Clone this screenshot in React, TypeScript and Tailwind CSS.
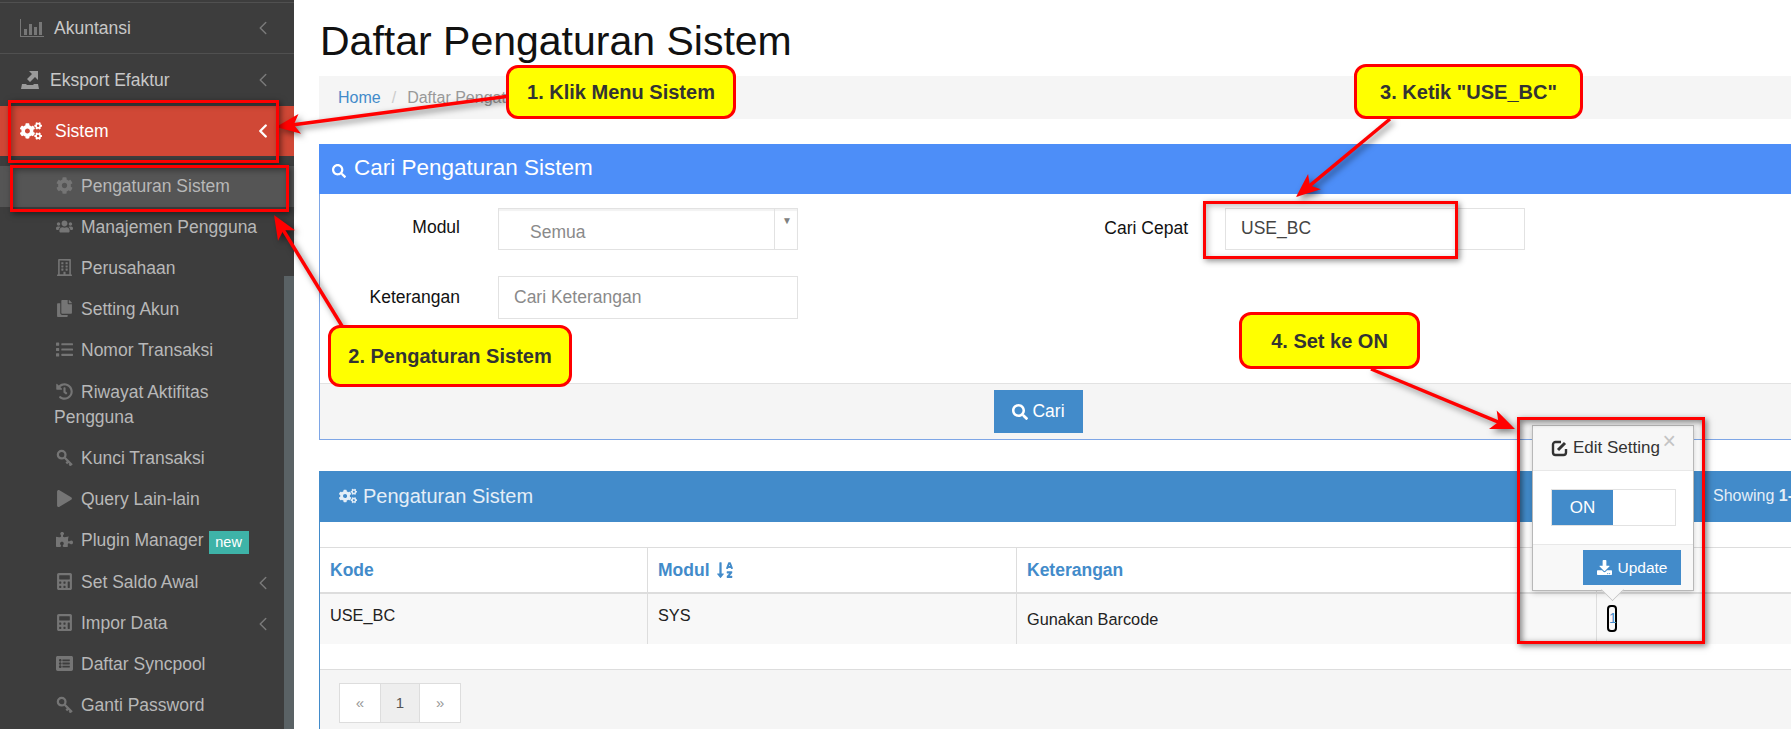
import type { ReactNode } from "react";
import {
  FaCalculator,
  FaCog,
  FaCogs,
  FaDownload,
  FaHistory,
  FaList,
  FaPlay,
  FaPuzzlePiece,
  FaRegBuilding,
  FaSearch,
  FaUsers,
  FaCopy,
  FaListAlt,
  FaSortAlphaDown,
} from "react-icons/fa";
import { ChevronLeft } from "lucide-react";

function ChartIcon() {
  return (
    <svg width="24" height="18" viewBox="0 0 24 18" fill="currentColor">
      <path d="M0 0h1v17h23v1H0z" />
      <path d="M4 10h3v6H4zM9 5h3v11H9zM14 8h3v8h-3zM19 3h3v13h-3z" />
    </svg>
  );
}

function ExportIcon() {
  return (
    <svg width="20" height="20" viewBox="0 0 20 20" fill="currentColor">
      <path d="M9 1h9v9l-3-3-5 5-3-3 5-5z" />
      <path d="M2 14h4l1 1h6l1-1h4l1 5H1z" />
    </svg>
  );
}

function KeyIcon() {
  return (
    <svg width="17" height="17" viewBox="0 0 16.500 16.500" fill="none" stroke="currentColor">
      <circle cx="5.500" cy="5.500" r="3.700" strokeWidth="2.200" />
      <path d="M8.500 8.500l7 7M12 12l-2 2M14.500 14.500l-1.500 1.500" strokeWidth="2.200" />
    </svg>
  );
}

function EditIcon() {
  return (
    <svg width="18" height="18" viewBox="0 0 18 18" fill="none" stroke="currentColor" strokeWidth="2.400">
      <path d="M10 3H4.500A2.500 2.500 0 0 0 2 5.500v8A2.500 2.500 0 0 0 4.500 16h8a2.500 2.500 0 0 0 2.500-2.500V10" />
      <path d="M7 11l7-7" strokeWidth="3" />
    </svg>
  );
}

function SubItem({ icon, children, active }: { icon: ReactNode; children: ReactNode; active?: boolean }) {
  return (
    <div className={`py-2 pl-[54px] pr-[34px] text-[17.500px] leading-[25px] text-[#b8b8b8] ${active ? "bg-[#555555]" : ""}`}>
      <span className="inline-block w-[27px] pl-[2px] align-[-2px] text-[17px] text-[#757575]">{icon}</span>
      {children}
    </div>
  );
}

function SubItemMore({ icon, children }: { icon: ReactNode; children: ReactNode }) {
  return (
    <div className="relative">
      <SubItem icon={icon}>{children}</SubItem>
      <ChevronLeft size={22} strokeWidth={1.6} className="absolute left-[252px] top-[10px] text-[#7a7a7a]" />
    </div>
  );
}

function Sidebar() {
  return (
    <aside className="relative h-[729px] w-[294px] shrink-0 overflow-hidden bg-[#3d3d3d]">
      <div className="mt-[2px] flex h-[52px] items-center border-y border-[#505050] pl-[20px] text-[17.500px] text-[#c8c8c8]">
        <span className="w-[34px] text-[#777777]"><ChartIcon /></span>
        Akuntansi
        <ChevronLeft size={22} strokeWidth={1.6} className="ml-auto mr-[20px] text-[#7a7a7a]" />
      </div>
      <div className="flex h-[52px] items-center pl-[20px] text-[17.500px] text-[#c8c8c8]">
        <span className="w-[30px] text-[#9a9a9a]"><ExportIcon /></span>
        Eksport Efaktur
        <ChevronLeft size={22} strokeWidth={1.6} className="ml-auto mr-[20px] text-[#7a7a7a]" />
      </div>
      <div className="flex h-[50px] items-center bg-[#d04836] pl-[20px] text-[17.500px] text-white">
        <FaCogs className="mr-[13px] text-[22px]" />
        Sistem
        <ChevronLeft size={22} strokeWidth={2.6} className="ml-auto mr-[20px]" />
      </div>
      <div className="h-[10px]" />
      <SubItem active icon={<FaCog />}>Pengaturan Sistem</SubItem>
      <SubItem icon={<FaUsers />}>Manajemen Pengguna</SubItem>
      <SubItem icon={<FaRegBuilding />}>Perusahaan</SubItem>
      <SubItem icon={<FaCopy />}>Setting Akun</SubItem>
      <SubItem icon={<FaList />}>Nomor Transaksi</SubItem>
      <div className="h-px" />
      <SubItem icon={<FaHistory />}>Riwayat Aktifitas Pengguna</SubItem>
      <SubItem icon={<KeyIcon />}>Kunci Transaksi</SubItem>
      <SubItem icon={<FaPlay />}>Query Lain-lain</SubItem>
      <SubItem icon={<FaPuzzlePiece />}>
        Plugin Manager
        <span className="ml-[5px] inline-block h-[23px] w-[40px] bg-[#3eb3a8] text-center align-[-1px] text-[14.500px] leading-[22px] text-white">new</span>
      </SubItem>
      <SubItemMore icon={<FaCalculator />}>Set Saldo Awal</SubItemMore>
      <SubItemMore icon={<FaCalculator />}>Impor Data</SubItemMore>
      <SubItem icon={<FaListAlt />}>Daftar Syncpool</SubItem>
      <SubItem icon={<KeyIcon />}>Ganti Password</SubItem>
      <div className="absolute right-0 top-[276px] h-[453px] w-[10px] bg-[#5a6265]" />
    </aside>
  );
}

function SearchPanel() {
  return (
    <section className="mt-[25px] w-[1500px] border-x border-b border-[#7ea6e6]">
      <div className="-mx-px flex h-[50px] items-center bg-[#4d8ef8] pb-[2px] pl-[13px] text-[22.500px] text-white">
        <FaSearch className="mr-[8px] mt-[6px] text-[14px]" />
        Cari Pengaturan Sistem
      </div>
      <div className="flex h-[189px] pt-[14px] text-[17.500px]">
        <div className="flex w-[774px] flex-col gap-[26px]">
          <div className="flex h-[42px] items-center">
            <span className="w-[140px] pb-[3px] text-right text-[#111111]">Modul</span>
            <div className="ml-[38px] flex h-[42px] w-[300px] border border-[#e2e2e2] shadow-[inset_0_2px_1px_#f2f2f2]">
              <span className="flex-1 pl-[31px] pt-[10px] text-[#8a8a8a]">Semua</span>
              <span className="w-[23px] border-l border-[#e2e2e2] pl-[7px] pt-[4px] text-[10px] text-[#808080]">▼</span>
            </div>
          </div>
          <div className="flex h-[43px] items-center">
            <span className="w-[140px] text-right text-[#111111]">Keterangan</span>
            <div className="ml-[38px] flex h-[43px] w-[300px] items-center border border-[#e2e2e2] pl-[15px] text-[#8a8a8a]">Cari Keterangan</div>
          </div>
        </div>
        <div className="flex h-[42px] items-center">
          <span className="w-[131px] pb-[1px] pr-[37px] text-right text-[#111111]">Cari Cepat</span>
          <div className="flex h-[42px] w-[300px] items-center border border-[#e2e2e2] pb-[2px] pl-[15px] text-[#444444]">USE_BC</div>
        </div>
      </div>
      <div className="flex h-[56px] border-t border-[#e2e2e2] bg-[#f5f5f5] pl-[674px] pt-[6px]">
        <div className="flex h-[43px] w-[89px] items-center justify-center gap-[4px] bg-[#428bca] text-[17.500px] text-white">
          <FaSearch className="text-[16px]" />
          Cari
        </div>
      </div>
    </section>
  );
}

function TablePanel() {
  return (
    <section className="mt-[31px] h-[300px] w-[1500px] border-x border-t-2 border-[#428bca] border-b-0">
      <div className="flex h-[49px] items-center whitespace-nowrap bg-[#428bca] pb-[3px] pl-[19px] text-[20px] text-[#e4eef7]">
        <FaCogs className="mr-[6px] text-[18px]" />
        Pengaturan Sistem
        <span className="absolute left-[1713px] text-[16px]">
          Showing <b>1-1</b>
        </span>
      </div>
      <div className="h-[25px]" />
      <div className="grid h-[97px] grid-cols-[328px_369px_580px_1fr] grid-rows-[46px_50px] border-y border-[#dddddd] text-[16.300px]">
        <div className="flex items-center border-r border-b-2 border-[#dddddd] pl-[10px] text-[17.500px] font-bold text-[#428bca]">Kode</div>
        <div className="flex items-center gap-[6px] border-r border-b-2 border-[#dddddd] pl-[10px] text-[17.500px] font-bold text-[#428bca]">
          Modul <FaSortAlphaDown className="text-[18px]" />
        </div>
        <div className="flex items-center border-r border-b-2 border-[#dddddd] pl-[10px] text-[17.500px] font-bold text-[#428bca]">Keterangan</div>
        <div className="border-b-2 border-[#dddddd]" />
        <div className="flex items-center border-r border-[#dddddd] bg-[#f8f8f8] pb-[8px] pl-[10px] text-[#222222]">USE_BC</div>
        <div className="flex items-center border-r border-[#dddddd] bg-[#f8f8f8] pb-[8px] pl-[10px] text-[#222222]">SYS</div>
        <div className="flex items-center border-r border-[#dddddd] bg-[#f8f8f8] pl-[10px] text-[#222222]">Gunakan Barcode</div>
        <div className="bg-[#f8f8f8]" />
      </div>
      <div className="h-[25px]" />
      <div className="h-[60px] border-t border-[#dddddd] bg-[#f5f5f5] pl-[19px] pt-[13px]">
        <div className="flex h-[40px] w-[122px] border border-[#dddddd] bg-white text-center text-[15px] leading-[38px] text-[#777777]">
          <span className="w-[40px] text-[#999999]">«</span>
          <span className="w-[41px] border-x border-[#dddddd] bg-[#eeeeee] text-[#555555]">1</span>
          <span className="w-[40px] text-[#999999]">»</span>
        </div>
      </div>
    </section>
  );
}

function EditPopover() {
  return (
    <div className="absolute left-[1532px] top-[425px] h-[166px] w-[162px] border border-[#b8b8b8] bg-white shadow-[0_2px_6px_rgba(0,0,0,0.2)]">
      <div className="relative flex h-[45px] items-center border-b border-[#e8e8e8] bg-[#f7f7f7] pl-[18px] text-[17px] text-[#333333]">
        <span className="mr-[4px]"><EditIcon /></span>
        Edit Setting
        <span className="absolute right-[17px] top-[0px] text-[23px] leading-[30px] text-[#c4c4c4]">×</span>
      </div>
      <div className="h-[73px] pl-[18px] pt-[18px]">
        <div className="flex h-[37px] w-[125px] border border-[#e2e2e2]">
          <span className="flex w-[61px] items-center justify-center bg-[#428bca] text-[17px] text-white">ON</span>
        </div>
      </div>
      <div className="h-[46px] border-t border-[#e8e8e8] bg-[#f8f8f8] pl-[50px] pt-[5px]">
        <div className="flex h-[35px] w-[98px] items-center justify-center gap-[6px] bg-[#428bca] text-[15.500px] text-white">
          <FaDownload className="text-[15px]" />
          Update
        </div>
      </div>
      <div className="absolute left-[71px] top-[155px] h-[17px] w-[17px] rotate-45 border-b border-r border-[#c4c4c4] bg-[#f8f8f8] [clip-path:polygon(100%_0,100%_100%,0_100%)]" />
    </div>
  );
}

function Arrow({ x1, y1, x2, y2 }: { x1: number; y1: number; x2: number; y2: number }) {
  const len = Math.hypot(x2 - x1, y2 - y1);
  const ux = (x2 - x1) / len;
  const uy = (y2 - y1) / len;
  const px = -uy;
  const py = ux;
  const p = (along: number, side: number) => `${x2 - ux * along + px * side},${y2 - uy * along + py * side}`;
  return (
    <g>
      <line x1={x1} y1={y1} x2={x2 - ux * 14} y2={y2 - uy * 14} stroke="#ff0000" strokeWidth="3.500" />
      <polygon points={`${p(0, 0)} ${p(24, 10)} ${p(18, 0)} ${p(24, -10)}`} fill="#ff0000" />
    </g>
  );
}

function Annotations() {
  return (
    <>
      <svg className="pointer-events-none absolute left-0 top-0 h-[729px] w-[1791px] drop-shadow-[3px_3px_3px_rgba(0,0,0,0.5)]" viewBox="0 0 1791 729">
        <Arrow x1={510} y1={96} x2={276} y2={127} />
        <Arrow x1={342} y1={326} x2={274} y2={215} />
        <Arrow x1={1390} y1={119} x2={1296} y2={197} />
        <Arrow x1={1371} y1={369} x2={1515} y2={429} />
      </svg>

      <div className="absolute left-[8px] top-[100px] h-[63px] w-[271px] border-[3px] border-[#ff0000] shadow-[2px_2px_6px_rgba(0,0,0,0.5),inset_2px_2px_6px_rgba(0,0,0,0.35)]" />
      <div className="absolute left-[10px] top-[165px] h-[47px] w-[279px] border-[3px] border-[#ff0000] shadow-[2px_2px_6px_rgba(0,0,0,0.5),inset_2px_2px_6px_rgba(0,0,0,0.35)]" />
      <div className="absolute left-[1203px] top-[201px] h-[58px] w-[255px] border-[3px] border-[#ff0000] shadow-[2px_2px_6px_rgba(0,0,0,0.45),inset_2px_2px_6px_rgba(0,0,0,0.25)]" />

      <EditPopover />
      <div className="absolute left-[1607px] top-[605px] h-[27px] w-[10px] rounded-[4px] border-2 border-black text-center text-[14px] leading-[23px] text-[#428bca]">1</div>
      <div className="absolute left-[1517px] top-[417px] h-[227px] w-[188px] border-[3px] border-[#ff0000] shadow-[2px_2px_6px_rgba(0,0,0,0.5),inset_2px_2px_6px_rgba(0,0,0,0.5)]" />

      <div className="absolute left-[506px] top-[65px] flex h-[54px] w-[230px] items-center justify-center rounded-[12px] border-[3px] border-[#ff0000] bg-[#ffff00] text-[20px] font-bold text-[#333333]">1. Klik Menu Sistem</div>
      <div className="absolute left-[328px] top-[325px] flex h-[62px] w-[244px] items-center justify-center rounded-[12px] border-[3px] border-[#ff0000] bg-[#ffff00] text-[20px] font-bold text-[#333333]">2. Pengaturan Sistem</div>
      <div className="absolute left-[1354px] top-[64px] flex h-[55px] w-[229px] items-center justify-center rounded-[12px] border-[3px] border-[#ff0000] bg-[#ffff00] text-[20px] font-bold text-[#333333]">3. Ketik "USE_BC"</div>
      <div className="absolute left-[1239px] top-[312px] flex h-[57px] w-[181px] items-center justify-center rounded-[12px] border-[3px] border-[#ff0000] bg-[#ffff00] text-[20px] font-bold text-[#333333]">4. Set ke ON</div>
    </>
  );
}

export default function App() {
  return (
    <div className="relative flex h-[729px] w-[1791px] overflow-hidden bg-white font-['Liberation_Sans',Arial,sans-serif]">
      <Sidebar />
      <main className="min-w-0 flex-1 pl-[25px]">
        <h1 className="h-[76px] pl-px pt-[18px] text-[41px] leading-[46px] text-[#111111]">Daftar Pengaturan Sistem</h1>
        <div className="flex h-[43px] w-[1500px] items-center bg-[#f5f5f5] pl-[19px] text-[16px] text-[#999999]">
          <span className="text-[#428bca]">Home</span>
          <span className="mx-[11px] text-[#cccccc]">/</span>
          Daftar Pengaturan Sistem
        </div>
        <SearchPanel />
        <TablePanel />
      </main>
      <Annotations />
    </div>
  );
}
